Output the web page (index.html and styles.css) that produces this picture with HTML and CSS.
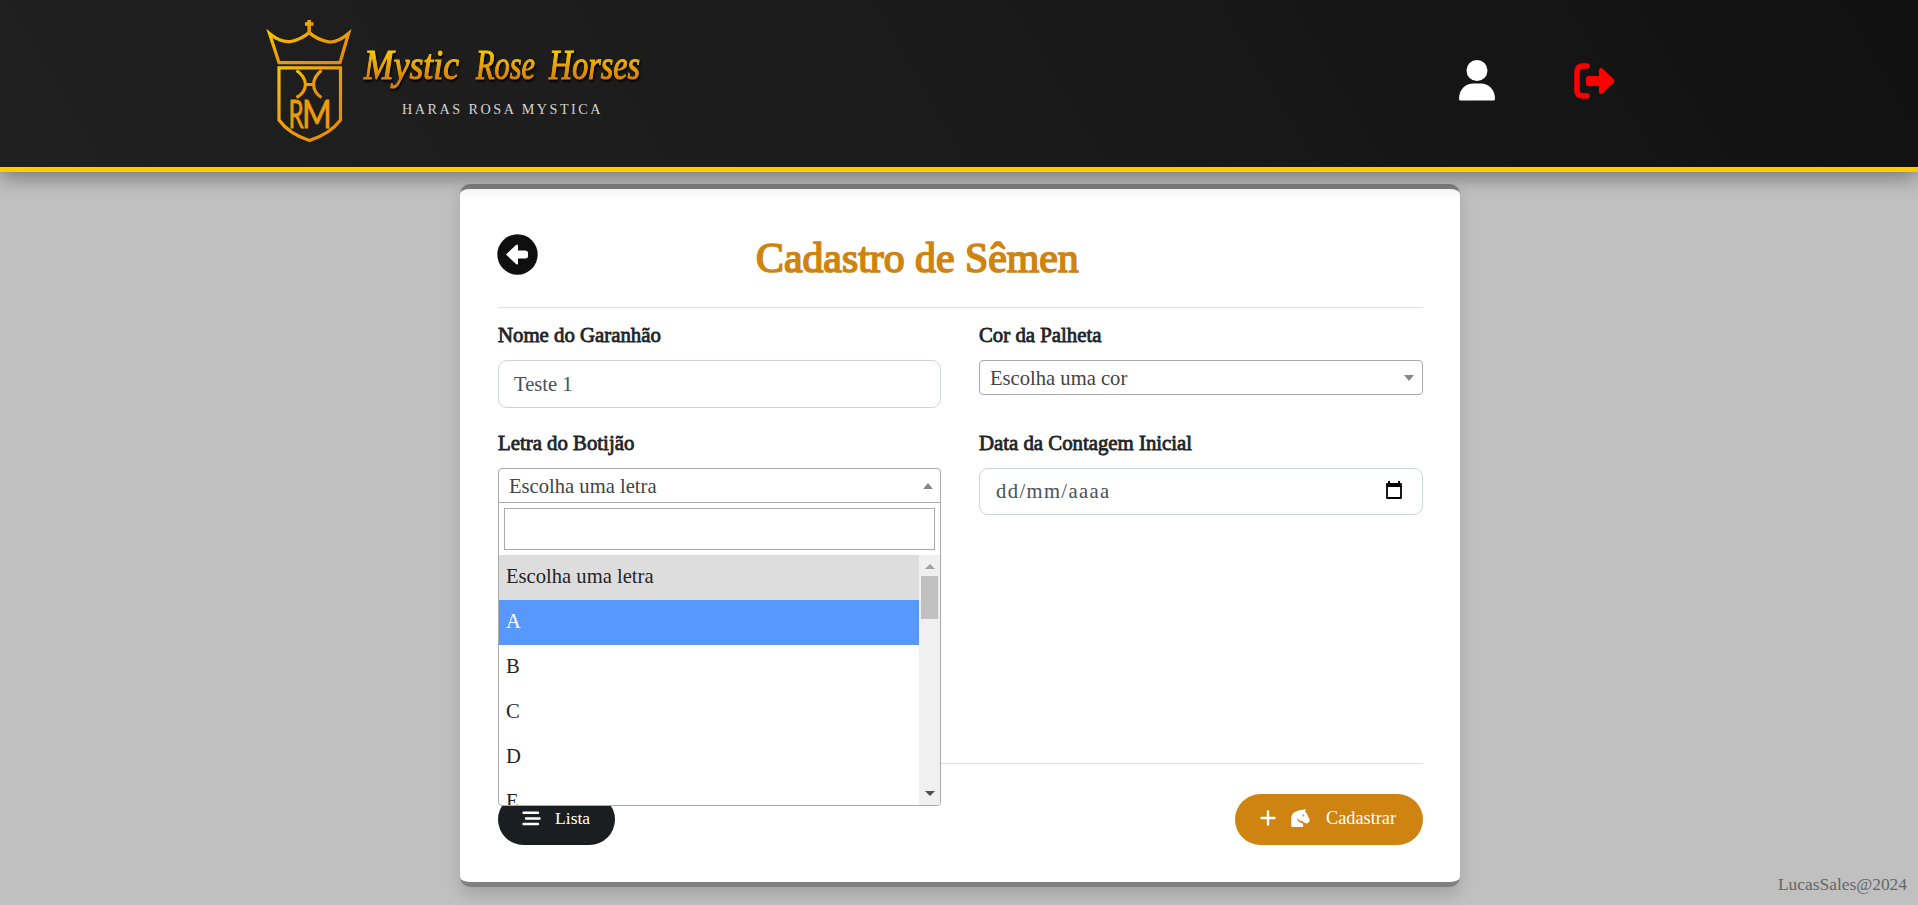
FILE: index.html
```html
<!DOCTYPE html>
<html lang="pt-BR">
<head>
<meta charset="utf-8">
<title>Cadastro de Sêmen</title>
<link rel="stylesheet" href="styles.css">
</head>
<body>
<header class="topbar">
  <svg class="logo" width="400" height="140" viewBox="0 0 400 140" role="img" aria-label="Mystic Rose Horses">
    <defs>
      <linearGradient id="gold" x1="0" y1="0" x2="1" y2="1">
        <stop offset="0" stop-color="#f5c400"/><stop offset=".5" stop-color="#ee9b06"/><stop offset="1" stop-color="#e08a08"/>
      </linearGradient>
      <linearGradient id="goldText" x1="0" y1="0" x2="0" y2="1">
        <stop offset=".15" stop-color="#f7d000"/><stop offset=".8" stop-color="#d9820c"/>
      </linearGradient>
    </defs>
    <g fill="none" stroke="url(#gold)" stroke-width="3.200" stroke-linejoin="miter">
      <path d="M3.500 14.500 L13 43.700 H74 L82.500 14.500 Q70 25 61 22.500 Q50 20 43.200 13.500 Q36 20 25 22.500 Q15 24 3.500 14.500 Z"/>
      <path d="M13 48.800 H74.500 V101 Q64 115 43.500 121.500 Q23 115 13 101 Z"/>
      <path d="M30.500 51.500 Q39 57 39.500 65.500 Q39 74 30.500 78.500 M55.500 51.500 Q48 57 47.500 65.500 Q48 74 55.500 78.500 M39 65.500 H48"/>
      <path d="M43.200 15 V1 M39 5 H47.500" stroke-width="3.500"/>
    </g>
    <g class="monogram">
      <text transform="translate(22.500 108.500) scale(.62 1)">R</text>
      <text transform="translate(36 108.500) scale(.82 1)">M</text>
    </g>
    <g class="brand">
      <text x="98" y="60" textLength="95" lengthAdjust="spacingAndGlyphs">Mystic</text>
      <text x="210" y="60" textLength="59" lengthAdjust="spacingAndGlyphs">Rose</text>
      <text x="283" y="60" textLength="91" lengthAdjust="spacingAndGlyphs">Horses</text>
    </g>
    <text class="tagline" x="136" y="95" textLength="201" lengthAdjust="spacingAndGlyphs">HARAS ROSA MYSTICA</text>
  </svg>
  <nav class="actions">
    <svg width="36" height="41" viewBox="0 0 36 41" fill="#fff"><circle cx="18" cy="10.500" r="10.500"/><path d="M0 39 C0 29 7 23.500 14 23.500 H22 C29 23.500 36 29 36 39 Q36 40.500 34.500 40.500 H1.500 Q0 40.500 0 39Z"/></svg>
    <svg width="41" height="36" viewBox="0 0 41 36"><path d="M13 3 H9 Q3 3 3 9 V27 Q3 33 9 33 H13" fill="none" stroke="#f00" stroke-width="5.600" stroke-linecap="round"/><path d="M14.500 13 H25 V7 Q25 5 27 5 Q28 5 29 6 L40 16.500 Q41 18 40 19.500 L29 30 Q28 31 27 31 Q25 31 25 29 V23 H14.500 Q12 23 12 20.500 V15.500 Q12 13 14.500 13Z" fill="#f00"/></svg>
  </nav>
</header>
<main class="card">
  <div class="card-head">
    <svg class="back" width="41" height="41" viewBox="0 0 41 41"><circle cx="20.500" cy="20.500" r="20.200" fill="#0f0f0f"/><path d="M9 20.500 L19 11 Q21 9.500 21 12 V16.500 H28 Q31 16.500 31 19 V22 Q31 24.500 28 24.500 H21 V29 Q21 31.500 19 30Z" fill="#fff"/></svg>
    <h1 class="title">Cadastro de Sêmen</h1>
  </div>
  <form class="fields">
    <div class="field"><span class="label">Nome do Garanhão</span><div class="input">Teste 1</div></div>
    <div class="field"><span class="label">Cor da Palheta</span><div class="select">Escolha uma cor<i class="caret"></i></div></div>
    <div class="field"><span class="label">Letra do Botijão</span>
      <div class="select open">Escolha uma letra<i class="caret up"></i>
        <div class="dropdown">
          <div class="search"></div>
          <div class="results">
            <ul class="options">
              <li class="chosen">Escolha uma letra</li><li class="active">A</li><li>B</li><li>C</li><li>D</li><li>E</li>
            </ul>
            <div class="scrollbar"><i class="caret up dim"></i><div class="track"><div class="thumb"></div></div><i class="caret dark"></i></div>
          </div>
        </div>
      </div>
    </div>
    <div class="field"><span class="label">Data da Contagem Inicial</span><div class="input date"><span>dd/mm/aaaa</span>
      <svg width="16" height="19" viewBox="0 0 16 19"><path d="M3 0 V3 M13 0 V3" stroke="#000" stroke-width="2"/><path d="M1 3 H15 V17 H1Z" fill="none" stroke="#000" stroke-width="1.800" stroke-linejoin="round"/><path d="M1 2 H15 V6 H1Z"/></svg></div></div>
  </form>
  <footer class="card-foot">
    <div class="btn dark-btn"><svg width="19" height="15" viewBox="0 0 19 15" stroke="#fff" stroke-width="2.400" stroke-linecap="round"><path d="M1.500 1.700 H16 M4 7.500 H17.500 M1.500 13 H16"/></svg><span>Lista</span></div>
    <div class="btn gold-btn"><svg width="16" height="16" viewBox="0 0 16 16" stroke="#fff" stroke-width="2.400" stroke-linecap="round"><path d="M8 1.500 V14.500 M1.500 8 H14.500"/></svg>
      <svg class="horse" width="19" height="18" viewBox="0 0 19 18"><path d="M.3 17 V9 Q.5 4 5 2.500 Q8 1 12 .8 L14.500 0 L14.300 3 Q16 4 16.500 6 L18.700 11 Q18.800 13 17 13.800 Q15.500 15 14 14 Q12.500 12.500 10.500 13 L8 11 L7 11.500 Q8 13.500 11 14 Q12.500 15 12.300 17 L11.500 18 H1.200Z" fill="#fff"/><circle cx="12.500" cy="6.500" r=".9" fill="#cf8411"/><path d="M6 10 Q8.500 13 12 12.600" stroke="#cf8411" fill="none" stroke-width="1"/></svg><span>Cadastrar</span></div>
  </footer>
</main>
<div class="credit">LucasSales@2024</div>
</body>
</html>
```

FILE: styles.css
```css
* { box-sizing: border-box; }
body {
  margin: 0; height: 905px; overflow: hidden; position: relative;
  background: #c0c0c0; color: #212529;
  font-family: "Liberation Serif", "Times New Roman", serif;
  font-size: 20.6px;
}
.topbar {
  position: relative; z-index: 2;
  height: 172px; padding: 19px 303px 0 266px;
  display: flex; justify-content: space-between; align-items: flex-start;
  background: linear-gradient(60deg, #202020, #1b1b1b 45%, #111);
  border-bottom: 5px solid #fc0;
  box-shadow: 0 5px 20px rgba(0, 0, 0, .4);
}
.logo { overflow: visible; }
.monogram { font: 39px Lato, sans-serif; fill: #ec9c08; stroke: #ec9c08; stroke-width: .8px; }
.brand {
  font: italic 43px "Liberation Serif", serif; fill: url(#goldText);
  stroke: url(#goldText); stroke-width: 1.2px; filter: drop-shadow(1px 2px 1px #000);
}
.tagline { font: 13.6px "Liberation Serif", serif; letter-spacing: 2.4px; fill: #d4d4d4; }
.actions { display: flex; align-items: center; gap: 79px; padding-top: 41px; }
.card {
  width: 1000px; height: 703px; margin: 12px 0 0 460px; padding: 0 37px 0 38px;
  display: flex; flex-direction: column;
  background: #fff; border: solid #808080; border-width: 5px 0; border-radius: 10px;
  box-shadow: 0 8px 16px rgba(0, 0, 0, .15);
}
.card-head {
  height: 119px; flex: none; display: flex; align-items: flex-start;
  padding-top: 45px; border-bottom: 1px solid #dee2e6;
}
.back { margin-left: -1px; flex: none; }
.title {
  margin: 0 0 0 218px; font-size: 41.8px; font-weight: 400; line-height: 48px;
  color: #cf8411; -webkit-text-stroke: 1.7px #cf8411; white-space: nowrap;
}
.fields {
  height: 456px; flex: none; display: grid; grid-template-columns: 443px 444px;
  grid-template-rows: 108px 1fr; column-gap: 38px;
  padding-top: 12px; border-bottom: 1px solid #dee2e6;
}
.field { padding-top: 2px; }
.label { display: block; height: 38px; line-height: 26px; color: #212529; -webkit-text-stroke: .8px #212529; font-size: 20.8px; }
.input {
  height: 48px; padding: 0 16px 0 15px; display: flex; align-items: center; justify-content: space-between;
  border: 1px solid #ced4da; border-radius: 9px; color: #495057; line-height: 44px;
}
.date { height: 47px; padding: 0 20px 2px 16px; }
.date span { letter-spacing: 1.4px; }
.select {
  position: relative; height: 35px; padding: 1px 8px 0 10px;
  display: flex; align-items: center; justify-content: space-between;
  border: 1px solid #aaa; border-radius: 4px; color: #444; line-height: 33px;
}
.open { border-radius: 4px 4px 0 0; padding-right: 7px; }
.caret { width: 0; height: 0; border: solid transparent; border-width: 6px 5px 0; border-top-color: #888; }
.up { border-width: 0 5px 6px; border-bottom-color: #888; }
.dim { border-width: 0 5px 5px; border-bottom-color: #a3a3a3; }
.dark { border-width: 5px 5px 0; border-top-color: #505050; }
.dropdown {
  position: absolute; z-index: 3; left: -1px; top: 33px; width: 443px; height: 304px;
  background: #fff; border: 1px solid #aaa; border-radius: 0 0 4px 4px; overflow: hidden; color: #212529;
}
.search { height: 42px; margin: 5px; border: 1px solid #aaa; }
.results { height: 250px; display: flex; }
.options { flex: 1; margin: 0; padding: 0; list-style: none; overflow: hidden; }
.options li { height: 45px; padding-left: 7px; line-height: 43px; }
.options .chosen { background: #ddd; }
.options .active { background: #5897fb; color: #fff; }
.scrollbar {
  width: 21px; background: #f0f0f0; display: flex; flex-direction: column; align-items: center;
  padding: 9px 0;
}
.track { flex: 1; padding-top: 7px; }
.thumb { width: 17px; height: 43px; background: #c1c1c1; }
.card-foot { display: flex; justify-content: space-between; padding-top: 30px; }
.btn { height: 51px; border-radius: 26px; display: flex; align-items: center; color: #fff; padding-bottom: 3px; }
.dark-btn { width: 117px; padding-left: 24px; gap: 14px; background: #1a1e21; font-size: 17.6px; }
.gold-btn { width: 188px; padding-left: 25px; background: #cf8411; font-size: 18.3px; }
.horse { margin: 0 16px 0 15px; }
.credit { position: absolute; right: 11px; bottom: 11px; font-size: 17.4px; line-height: 20px; color: #666; }
```
